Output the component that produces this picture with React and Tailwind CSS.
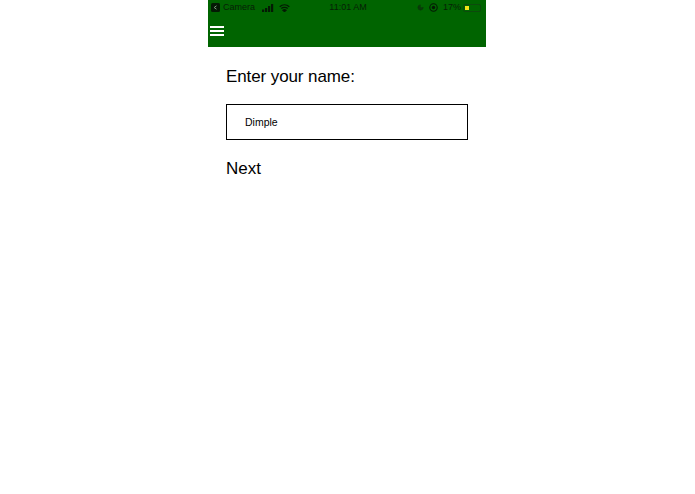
import { Moon } from 'lucide-react';

function StatusBar() {
  return (
    <div className="h-[15px] flex items-center justify-between pl-[3px] pr-[5px] text-[9px] leading-none text-[#062006] font-['Liberation_Sans',sans-serif]">
      <div className="flex items-center w-[104px] shrink-0">
        <div className="w-[9px] h-[9px] rounded-[1.5px] bg-[#041a04] mr-[3px] flex items-center justify-center">
          <svg width="5" height="5" viewBox="0 0 5 5" fill="none" stroke="#7f9a7f" strokeWidth="1">
            <path d="M3.5 0.8L1.2 2.5L3.5 4.2" />
          </svg>
        </div>
        <span className="whitespace-nowrap">Camera</span>
        <svg width="13" height="8" viewBox="0 0 13 8" className="ml-[7px]" fill="#041a04">
          <rect x="0" y="5.5" width="2.2" height="2.5" />
          <rect x="3" y="4" width="2.2" height="4" />
          <rect x="6" y="2" width="2.2" height="6" />
          <rect x="9" y="0" width="2.2" height="8" />
        </svg>
        <svg width="11" height="8" viewBox="0 0 11 8" className="ml-[4px]" fill="none" stroke="#041a04" strokeWidth="1.3">
          <path d="M0.7 2.8C3.5 0.2 7.5 0.2 10.3 2.8" />
          <path d="M2.3 4.5C4 3 7 3 8.7 4.5" />
          <path d="M4 6.2C4.9 5.5 6.1 5.5 7 6.2L5.5 7.6Z" fill="#041a04" />
        </svg>
      </div>
      <span className="whitespace-nowrap">11:01 AM</span>
      <div className="flex items-center justify-end w-[100px] shrink-0">
        <Moon size={7} fill="#0a3a0a" stroke="#0a3a0a" className="mr-[5px]" />
        <svg width="9" height="9" viewBox="0 0 9 9" className="mr-[5px]">
          <circle cx="4.5" cy="4.5" r="3.7" fill="none" stroke="#041a04" strokeWidth="1.1" />
          <circle cx="4.5" cy="4.5" r="1.7" fill="#041a04" />
        </svg>
        <span className="whitespace-nowrap">17%</span>
        <div className="ml-[2px] w-[18px] h-[8px] rounded-[2px] border border-[#0d4a0d] p-px">
          <div className="w-[4px] h-full bg-[#f4e419]" />
        </div>
      </div>
    </div>
  );
}

export default function App() {
  return (
    <div className="min-h-[494px] bg-white pl-[208px] font-['Liberation_Sans',sans-serif] text-black">
      <div className="w-[278px]">
        <div className="h-[47px] bg-[#006400]">
          <StatusBar />
          <div className="pl-[2px] pt-[11px] flex flex-col gap-[2px]">
            <div className="h-[2px] w-[14px] bg-white" />
            <div className="h-[2px] w-[14px] bg-white" />
            <div className="h-[2px] w-[14px] bg-white" />
          </div>
        </div>
        <div className="px-[18px]">
          <h1 className="mt-[19px] text-[17px] tracking-[-0.1px] leading-[21px] font-normal">Enter your name:</h1>
          <input
            readOnly
            value="Dimple"
            className="mt-[17px] block w-[242px] h-[36px] border border-black pl-[18px] text-[10.5px] outline-none"
          />
          <p className="mt-[18px] text-[17px] leading-[21px]">Next</p>
        </div>
      </div>
    </div>
  );
}
